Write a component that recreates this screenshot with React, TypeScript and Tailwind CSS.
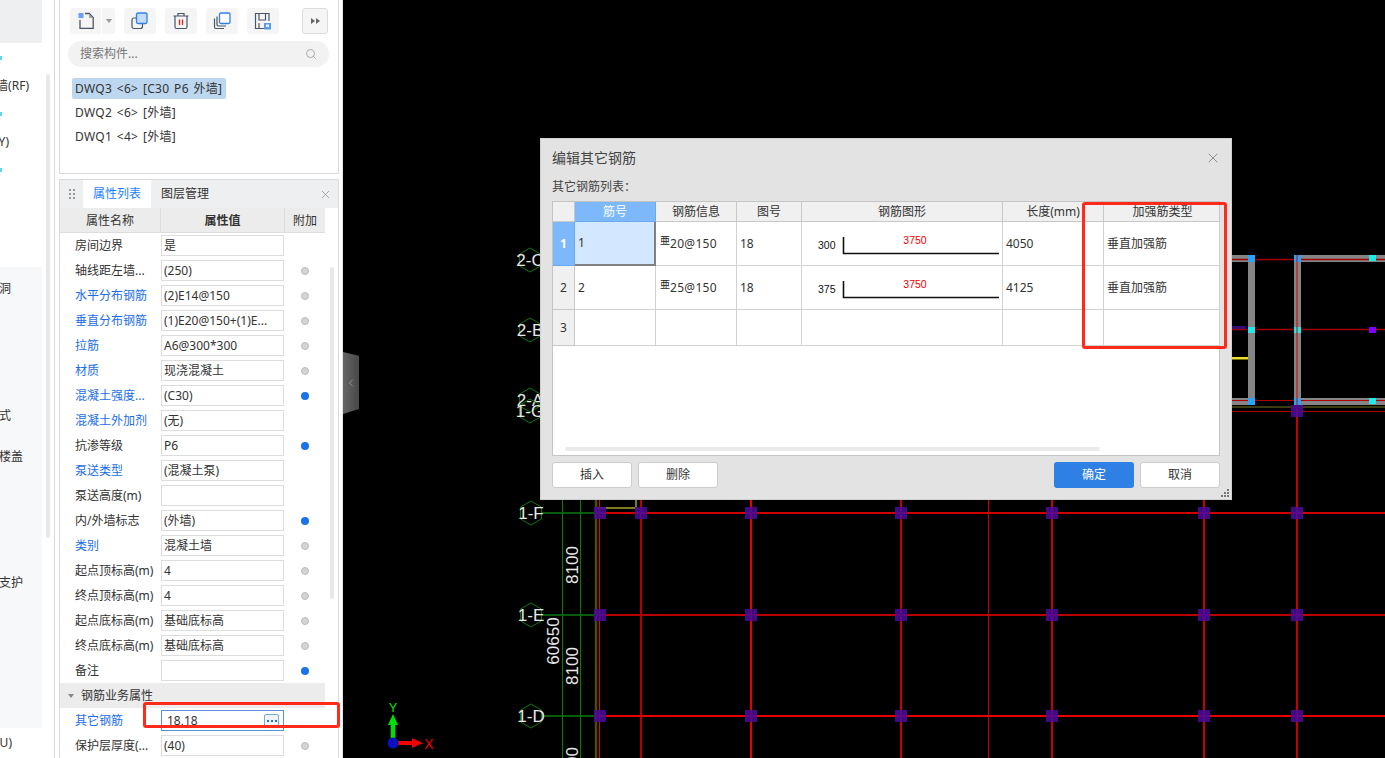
import React from 'react';
import { Search, X, ChevronLeft } from 'lucide-react';

const uiFont = "font-['Noto_Sans','Noto_Sans_CJK_SC',sans-serif]";

type Prop = { name: string; value: string; link?: boolean; dot?: 'grey' | 'blue' };

const props: Prop[] = [
  { name: '房间边界', value: '是' },
  { name: '轴线距左墙...', value: '(250)', dot: 'grey' },
  { name: '水平分布钢筋', value: '(2)E14@150', link: true, dot: 'grey' },
  { name: '垂直分布钢筋', value: '(1)E20@150+(1)E...', link: true, dot: 'grey' },
  { name: '拉筋', value: 'A6@300*300', link: true, dot: 'grey' },
  { name: '材质', value: '现浇混凝土', link: true, dot: 'grey' },
  { name: '混凝土强度...', value: '(C30)', link: true, dot: 'blue' },
  { name: '混凝土外加剂', value: '(无)', link: true },
  { name: '抗渗等级', value: 'P6', dot: 'blue' },
  { name: '泵送类型', value: '(混凝土泵)', link: true },
  { name: '泵送高度(m)', value: '' },
  { name: '内/外墙标志', value: '(外墙)', dot: 'blue' },
  { name: '类别', value: '混凝土墙', link: true, dot: 'grey' },
  { name: '起点顶标高(m)', value: '4', dot: 'grey' },
  { name: '终点顶标高(m)', value: '4', dot: 'grey' },
  { name: '起点底标高(m)', value: '基础底标高', dot: 'grey' },
  { name: '终点底标高(m)', value: '基础底标高', dot: 'grey' },
  { name: '备注', value: '', dot: 'blue' },
];

const PropRow = ({ name, value, link, dot }: Prop) => (
  <div className="flex h-[25px] items-center">
    <div className={`w-[86px] ml-[15px] text-[12px] whitespace-nowrap ${link ? 'text-[#1a6ee8]' : 'text-[#333]'}`}>{name}</div>
    <div className="w-[123px] h-[21px] border border-[#ddd] bg-white px-[2px] text-[12px] leading-[19px] text-[#333] whitespace-nowrap overflow-hidden">
      {value}
    </div>
    {dot && (
      <div
        className={`ml-[17px] w-[8px] h-[8px] rounded-full ${dot === 'blue' ? 'bg-[#1a73e8]' : 'bg-[#d4d4d4] border border-[#bbb]'}`}
      />
    )}
  </div>
);

const ToolBtn = ({ children, className = '' }: { children: React.ReactNode; className?: string }) => (
  <div className={`w-[32px] h-[26px] rounded-[3px] bg-[#f5f5f5] flex items-center justify-center ${className}`}>{children}</div>
);

const Toolbar = () => (
  <div className="flex h-[26px] mt-[8px] ml-[10px] items-center">
    <div className="flex w-[45px] h-[26px] rounded-[3px] bg-[#f5f5f5]">
      <div className="w-[32px] flex items-center justify-center border-r border-white">
        <svg width="18" height="18" viewBox="0 0 18 18" fill="none">
          <path d="M3 8V16.3H16.2V5.5L12.2 1.5H8" stroke="#4a5568" strokeWidth="1.3" />
          <path d="M12 2V6H16" fill="#9aa3ad" />
          <rect x="1.5" y="1" width="5" height="5" fill="#3b82f6" opacity="0.75" />
        </svg>
      </div>
      <div className="flex-1 flex items-center justify-center">
        <div className="w-0 h-0 border-x-[3px] border-x-transparent border-t-[4px] border-t-[#999]" />
      </div>
    </div>
    <ToolBtn className="ml-[9px]">
      <svg width="18" height="18" viewBox="0 0 18 18" fill="none">
        <rect x="1" y="6" width="10.5" height="10.5" rx="2" stroke="#4a5568" strokeWidth="1.2" />
        <rect x="5.5" y="1" width="10.5" height="10.5" rx="1.5" fill="#c5dcf8" stroke="#2f80ed" strokeWidth="1.3" />
      </svg>
    </ToolBtn>
    <ToolBtn className="ml-[9px]">
      <svg width="18" height="18" viewBox="0 0 18 18" fill="none">
        <path d="M1.5 4H16.5M6 4V1.5H12V4M3 4V15a1.5 1.5 0 0 0 1.5 1.5h9A1.5 1.5 0 0 0 15 15V4" stroke="#4a5568" strokeWidth="1.2" />
        <path d="M7.5 7.5V13M10.5 7.5V13" stroke="#e02020" strokeWidth="1.3" />
      </svg>
    </ToolBtn>
    <ToolBtn className="ml-[9px]">
      <svg width="18" height="18" viewBox="0 0 18 18" fill="none">
        <path d="M1.5 6.5V15a1.5 1.5 0 0 0 1.5 1.5H11" stroke="#4a5568" strokeWidth="1.2" />
        <path d="M4 4.5V12.5a1.5 1.5 0 0 0 1.5 1.5H13" stroke="#4a5568" strokeWidth="1.2" />
        <rect x="6.5" y="1" width="10.5" height="10.5" rx="1.5" fill="#fff" stroke="#2f80ed" strokeWidth="1.3" />
      </svg>
    </ToolBtn>
    <ToolBtn className="ml-[9px]">
      <svg width="18" height="18" viewBox="0 0 18 18" fill="none">
        <path d="M10 16.5H1.5V1.5H15V9" stroke="#4a5568" strokeWidth="1.2" />
        <path d="M5 2V8H11.5V2M5 16V11" stroke="#4a5568" strokeWidth="1.2" />
        <rect x="10" y="11" width="7" height="6.5" fill="#5b9be8" />
        <rect x="12" y="12.5" width="3" height="2.5" fill="#e8f1fc" />
      </svg>
    </ToolBtn>
    <div className="ml-[23px] w-[26px] h-[26px] rounded-[3px] bg-[#f5f5f5] border border-[#ddd] flex items-center justify-center gap-[1px]">
      <div className="w-0 h-0 border-y-[3px] border-y-transparent border-l-[4px] border-l-[#666]" />
      <div className="w-0 h-0 border-y-[3px] border-y-transparent border-l-[4px] border-l-[#666]" />
    </div>
  </div>
);

const Sidebar = () => (
  <div className="w-[343px] h-[758px] shrink-0 bg-white flex overflow-hidden border-r border-[#e5e5e5]">
    {/* cut-off module tree */}
    <div className="w-[42px] shrink-0 flex flex-col">
      <div className="h-[43px] bg-[#eeeff1] shrink-0" />
      <div className="h-[224px] shrink-0 text-[12px] text-[#333]">
        <div className="w-[2px] h-[4px] mt-[13px] bg-[#5fd4f0]" />
        <div className="flex justify-end pr-[13px] mt-[17px] whitespace-nowrap">剪力墙(RF)</div>
        <div className="w-[2px] h-[4px] mt-[17px] bg-[#5fd4f0]" />
        <div className="flex justify-end pr-[33px] mt-[17px] whitespace-nowrap">(Y)</div>
        <div className="w-[2px] h-[4px] mt-[17px] bg-[#5fd4f0]" />
      </div>
      <div className="flex-1 bg-[#f7f8fa] text-[12px] text-[#333] h-[461px] max-h-[461px] shrink-0">
        <div className="flex justify-end pr-[31px] mt-[13px] whitespace-nowrap">门洞</div>
        <div className="flex justify-end pr-[31px] mt-[109px] whitespace-nowrap">形式</div>
        <div className="flex justify-end pr-[19px] mt-[23px] whitespace-nowrap">现浇楼盖</div>
        <div className="flex justify-end pr-[19px] mt-[108px] whitespace-nowrap">基坑支护</div>
      </div>
      <div className="h-[30px] shrink-0 flex justify-end pr-[30px] pt-[6px] text-[12px] text-[#333] whitespace-nowrap">(U)</div>
    </div>
    <div className="w-[13px] shrink-0 border-r border-[#d9d9d9] pl-[4px]">
      <div className="w-[4px] h-[464px] mt-[74px] bg-[#e8e8e8] rounded-full" />
    </div>
    <div className="flex-1 pl-[4px] pr-[3px] flex flex-col">
      {/* component list */}
      <div className="h-[174px] border border-[#d9d9d9] border-t-0 shrink-0">
        <Toolbar />
        <div className="mt-[7px] ml-[8px] w-[261px] h-[26px] rounded-full bg-[#f2f2f2] flex items-center justify-between pl-[12px] pr-[12px] text-[12px] text-[#777]">
          <span>搜索构件...</span>
          <Search className="w-[12px] h-[12px] text-[#aaa]" strokeWidth={2} />
        </div>
        <div className="mt-[11px] ml-[12px] flex flex-col items-start text-[12px] text-[#333] tracking-[0.3px] [word-spacing:1.25px]">
          <div className="h-[21px] w-[154px] pl-[3px] rounded-[2px] bg-[#bdd7f0] leading-[21px] whitespace-pre">DWQ3 {'<6>'} [C30 P6 外墙]</div>
          <div className="mt-[3px] h-[21px] pl-[3px] leading-[21px] whitespace-pre">DWQ2 {'<6>'} [外墙]</div>
          <div className="mt-[3px] h-[21px] pl-[3px] leading-[21px] whitespace-pre">DWQ1 {'<4>'} [外墙]</div>
        </div>
      </div>
      {/* property list */}
      <div className="mt-[5px] flex-1 border border-[#d9d9d9] border-b-0 relative overflow-hidden">
        <div className="h-[28px] bg-[#eeeff1] flex items-stretch text-[12px]">
          <div className="w-[23px] flex items-center justify-center">
            <div className="grid grid-cols-2 gap-[2px]">
              {[0, 1, 2, 3, 4, 5].map((i) => (
                <div key={i} className="w-[2px] h-[2px] bg-[#999]" />
              ))}
            </div>
          </div>
          <div className="w-[68px] bg-white text-[#1a7fff] flex items-center justify-center">属性列表</div>
          <div className="ml-[10px] flex items-center text-[#333]">图层管理</div>
          <X className="ml-auto mr-[6px] self-center w-[13px] h-[13px] text-[#999]" strokeWidth={1.5} />
        </div>
        <div className="flex h-[25px] text-[12px] text-[#333] w-[265px] bg-[#ececec] border-b border-[#ddd]">
          <div className="w-[101px] text-center leading-[26px] border-r border-[#ddd]">属性名称</div>
          <div className="w-[124px] text-center leading-[26px] font-bold border-r border-[#ddd]">属性值</div>
          <div className="flex-1 text-center leading-[26px]">附加</div>
        </div>
        {props.map((p) => (
          <PropRow key={p.name} {...p} />
        ))}
        <div className="h-[25px] w-[265px] bg-[#ececec] flex items-center pl-[8px] text-[12px] text-[#333]">
          <div className="w-0 h-0 border-x-[3px] border-x-transparent border-t-[4px] border-t-[#888]" />
          <span className="ml-[7px]">钢筋业务属性</span>
        </div>
        <div className="flex h-[25px] items-center">
          <div className="w-[86px] ml-[15px] text-[12px] text-[#1a6ee8]">其它钢筋</div>
          <div className="w-[123px] h-[21px] border border-[#5b8fd8] bg-white pl-[5px] pr-[4px] flex items-center justify-between text-[12px] text-[#333]">
            <span>18,18</span>
            <div className="w-[15px] h-[14px] rounded-[2px] border border-[#7aa7e0] bg-[#eef4fc] flex items-center justify-center gap-[2px]">
              <div className="w-[2px] h-[2px] bg-[#2f6fc4]" />
              <div className="w-[2px] h-[2px] bg-[#2f6fc4]" />
              <div className="w-[2px] h-[2px] bg-[#2f6fc4]" />
            </div>
          </div>
        </div>
        <PropRow name="保护层厚度(..." value="(40)" dot="grey" />
        {/* scrollbar */}
        <div className="absolute top-[87px] right-[4px] w-[4px] h-[332px] rounded-full bg-[#e8e8e8]" />
      </div>
    </div>
  </div>
);

const Cad = () => {
  // x, colour, stroke width of the red axis lines
  const redX: [number, string, number][] = [
    [599.5, '#f00000', 1],
    [641, '#b80000', 2],
    [751, '#e80000', 2],
    [901, '#c80000', 2],
    [988.5, '#d00000', 1],
    [1052, '#c80000', 2],
    [1204, '#c80000', 2],
    [1297, '#c80000', 2],
  ];
  const squares: [number, number][] = [
    [600, 513], [641, 513], [751, 513], [901, 513], [1052, 513], [1204, 513], [1297, 513],
    [600, 615], [751, 615], [901, 615], [1052, 615], [1204, 615], [1297, 615],
    [600, 716], [751, 716], [901, 716], [1052, 716], [1204, 716], [1297, 716],
    [1297, 411],
  ];
  const hexes: [string, number, number][] = [
    ['2-C', 530, 260], ['2-B', 530, 330], ['2-A', 530, 400], ['1-G', 530, 411],
    ['1-F', 531, 513], ['1-E', 531, 615], ['1-D', 531, 716],
  ];
  const hexPts = (cx: number, cy: number) =>
    [[0, -12], [10.4, -6], [10.4, 6], [0, 12], [-10.4, 6], [-10.4, -6]].map(([a, b]) => `${cx + a},${cy + b}`).join(' ');

  return (
    <svg className="absolute inset-0" width="1042" height="758" viewBox="343 0 1042 758" fontFamily="'Liberation Sans', sans-serif">
      <path d="M562.5 500V758M580.5 500V758" stroke="#0b7a0b" strokeWidth="1" />
      <path d="M542 513H600M542 615H600M542 716H600" stroke="#0b7a0b" strokeWidth="1.5" />
      <path d="M596 500V758" stroke="#4d4a14" strokeWidth="2.5" />
      <path d="M597 508H636V500" stroke="#7f7a20" strokeWidth="2" fill="none" />
      {redX.map(([x, c, w]) => (
        <path key={x} d={`M${x} ${x === 1297 ? 255 : 500}V758`} stroke={c} strokeWidth={w} />
      ))}
      <path d="M600 513H1385" stroke="#d00000" strokeWidth="2" />
      <path d="M600 615H1385" stroke="#b80000" strokeWidth="2" />
      <path d="M600 716H1385" stroke="#e80000" strokeWidth="2" />

      {/* walls right of the dialog */}
      <path d="M1232 258.5H1255M1294 258.5H1385M1232 401.5H1255M1294 401.5H1385M1251.5 255V405M1297.5 255V405" stroke="#858585" strokeWidth="7" />
      <path d="M1232 407H1385" stroke="#3b3a10" strokeWidth="2" />
      <path d="M1232 259.5H1385M1232 329.5H1385" stroke="#a00000" strokeWidth="1.5" />
      <path d="M1232 400.5H1385M1232 411.5H1385" stroke="#b00000" strokeWidth="1" />
      <rect x="1232" y="326" width="14" height="3" fill="#3a0a7a" />
      <rect x="1232" y="357" width="16" height="2.5" fill="#e8e020" />
      {[[1248, 255], [1294, 255], [1248, 398], [1294, 398]].map(([x, y]) => (
        <rect key={`${x}-${y}`} x={x} y={y} width="7" height="7" fill="#2aa5f5" />
      ))}
      {[[1248, 327], [1294, 327], [1369, 255], [1369, 398]].map(([x, y]) => (
        <rect key={`${x}-${y}`} x={x} y={y} width="7" height="6" fill="#22e8e8" />
      ))}
      <rect x="1369" y="327" width="7" height="6" fill="#8000ff" />

      {squares.map(([x, y]) => (
        <rect key={`${x}-${y}`} x={x - 6} y={y - 6} width="12" height="12" fill="#4b0a96" opacity="0.88" />
      ))}
      <path d="M1297 255V405" stroke="#d00000" strokeWidth="1" />

      {hexes.map(([t, x, y]) => (
        <g key={t}>
          <polygon points={hexPts(x, y)} fill="none" stroke="#0b7a0b" strokeWidth="1" />
          <text x={x} y={y + 6} textAnchor="middle" fontSize="17" fill="#e8e8e8">{t}</text>
        </g>
      ))}

      {/* dimensions */}
      <text transform="translate(578 565) rotate(-90)" textAnchor="middle" fontSize="17" fill="#e8e8e8">8100</text>
      <text transform="translate(578 666) rotate(-90)" textAnchor="middle" fontSize="17" fill="#e8e8e8">8100</text>
      <text transform="translate(559 641) rotate(-90)" textAnchor="middle" fontSize="17" fill="#e8e8e8">60650</text>
      <text transform="translate(578 766) rotate(-90)" textAnchor="middle" fontSize="17" fill="#e8e8e8">8100</text>

      {/* axis gizmo */}
      <path d="M393 743V724" stroke="#00e000" strokeWidth="4.5" />
      <polygon points="393,714 388,725 398,725" fill="#00e000" />
      <path d="M393 743H412" stroke="#f00000" strokeWidth="4" />
      <polygon points="423,743 412,738 412,748" fill="#f00000" />
      <circle cx="393" cy="743" r="5.5" fill="#0a10c0" />
      <text x="393" y="712" textAnchor="middle" fontSize="13" fill="#00e000">Y</text>
      <text x="429" y="749" textAnchor="middle" fontSize="14" fill="#f00000">X</text>
    </svg>
  );
};

const ShapeCell = ({ left, mid }: { left: string; mid: string }) => (
  <svg width="200" height="43" viewBox="0 0 200 43" fontFamily="'Liberation Sans', sans-serif">
    <text x="16" y="27" fontSize="10.5" fill="#111">{left}</text>
    <path d="M41.5 15V31.5H197" stroke="#111" strokeWidth="1.6" fill="none" />
    <text x="113" y="22" textAnchor="middle" fontSize="10.5" fill="#f00000">{mid}</text>
  </svg>
);

const cell = 'border-r border-b border-[#d2d2d2] flex items-center text-[12px] text-[#333] pl-[3px] overflow-hidden';
const head = 'border-r border-b border-[#c8c8c8] bg-[#f0f0f0] flex items-center justify-center text-[12px] text-[#333]';

const RebarCode = ({ text }: { text: string }) => (
  <span className="flex items-start pl-px">
    <span className="text-[10px] leading-[11px] text-[#222]">亜</span>
    <span className="tracking-[0.3px]">{text}</span>
  </span>
);

const Dialog = () => (
  <div className="absolute left-[197px] top-[138px] w-[692px] h-[362px] bg-[#e3e3e3] border border-[#d0d0d0] px-[11px]">
    <div className="flex items-center justify-between h-[37px] text-[14px] text-[#444]">
      <span>编辑其它钢筋</span>
      <X className="w-[16px] h-[16px] -mr-[1px] text-[#777]" strokeWidth={1.2} />
    </div>
    <div className="h-[25px] text-[12px] text-[#444] leading-[21px]">其它钢筋列表：</div>
    <div className="w-[668px] h-[255px] bg-white border border-[#c4c4c4] relative">
      <div className="grid grid-cols-[22px_81px_81px_65px_201px_101px_116px] grid-rows-[20px_44px_44px_36px]">
        <div className={head} />
        <div className="bg-[#7db8fb] border-r border-b border-[#6aa8f0] text-white text-[12px] flex items-center justify-center">筋号</div>
        <div className={head}>钢筋信息</div>
        <div className={head}>图号</div>
        <div className={head}>钢筋图形</div>
        <div className={head}>长度(mm)</div>
        <div className={`${head} pl-[2px]`}>加强筋类型</div>

        <div className="bg-[#7db8fb] border-r border-b border-[#6aa8f0] text-white text-[12px] font-bold flex items-center justify-center">1</div>
        <div className="bg-[#d3e8fe] border-r-2 border-b-2 border-[#808080] flex items-center text-[12px] text-[#333] pl-[3px]">1</div>
        <div className={cell}><RebarCode text="20@150" /></div>
        <div className={cell}>18</div>
        <div className={`${cell} !pl-0`}><ShapeCell left="300" mid="3750" /></div>
        <div className={cell}>4050</div>
        <div className={cell}>垂直加强筋</div>

        <div className={head}>2</div>
        <div className={cell}>2</div>
        <div className={cell}><RebarCode text="25@150" /></div>
        <div className={cell}>18</div>
        <div className={`${cell} !pl-0`}><ShapeCell left="375" mid="3750" /></div>
        <div className={cell}>4125</div>
        <div className={cell}>垂直加强筋</div>

        <div className={head}>3</div>
        <div className={cell} />
        <div className={cell} />
        <div className={cell} />
        <div className={cell} />
        <div className={cell} />
        <div className={cell} />
      </div>
      <div className="absolute left-[12px] bottom-[4px] w-[535px] h-[4px] rounded-full bg-[#ebebeb]" />
    </div>
    <div className="mt-[6px] flex gap-[6px] text-[12px] text-[#333]">
      <div className="w-[80px] h-[26px] rounded-[3px] bg-white border border-[#ccc] flex items-center justify-center">插入</div>
      <div className="w-[80px] h-[26px] rounded-[3px] bg-white border border-[#ccc] flex items-center justify-center">删除</div>
      <div className="ml-auto w-[80px] h-[26px] rounded-[3px] bg-[#2f80e4] text-white flex items-center justify-center">确定</div>
      <div className="w-[80px] h-[26px] rounded-[3px] bg-white border border-[#ccc] flex items-center justify-center">取消</div>
    </div>
    <div className="absolute right-[2px] bottom-[2px] grid grid-cols-3 gap-[1px]">
      {[0, 1, 2, 3, 4, 5, 6, 7, 8].map((i) => (
        <div key={i} className={`w-[2px] h-[2px] ${[0, 1, 3].includes(i) ? 'bg-transparent' : 'bg-[#777]'}`} />
      ))}
    </div>
  </div>
);

export default function App() {
  return (
    <div className={`relative w-[1385px] h-[758px] overflow-hidden flex bg-black ${uiFont}`}>
      <Sidebar />
      <div className="relative flex-1 bg-black">
        <Cad />
        <div className="absolute left-0 top-[352px] w-[16px] h-[62px] bg-gradient-to-r from-[#666] to-[#484848] [clip-path:polygon(0_0,100%_6%,100%_92%,0_100%)] flex items-center justify-center">
          <ChevronLeft className="w-[12px] h-[12px] text-[#aaa]" strokeWidth={1.5} />
        </div>
        <Dialog />
      </div>
      {/* red markup boxes drawn over the screenshot */}
      <div className="absolute left-[143px] top-[702px] w-[197px] h-[26px] border-[3px] border-[#ff2a1a] rounded-[3px]" />
      <div className="absolute left-[1082px] top-[202px] w-[145px] h-[147px] border-[3px] border-[#ff2a1a] rounded-[3px]" />
    </div>
  );
}
